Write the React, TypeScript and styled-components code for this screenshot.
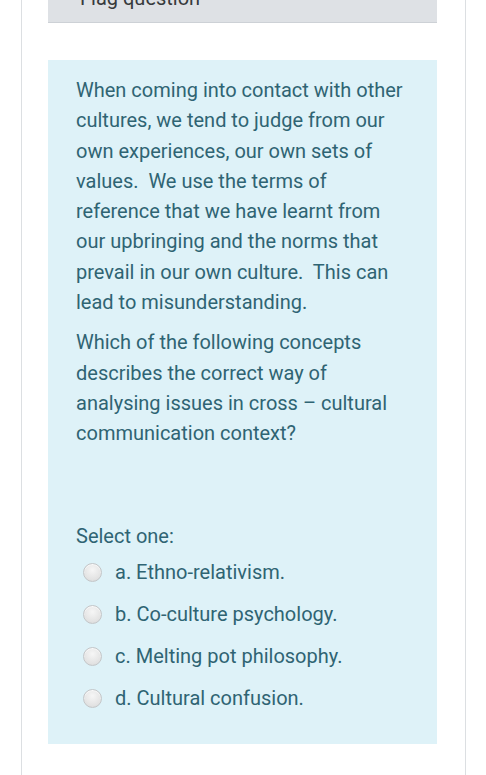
import React from "react";
import styled, { createGlobalStyle } from "styled-components";

const GlobalStyle = createGlobalStyle`
  html, body {
    margin: 0;
    padding: 0;
    background: #ffffff;
  }
  body {
    font-family: Roboto, "Liberation Sans", Arial, sans-serif;
    overflow: hidden;
  }
`;

const Page = styled.div`
  width: 486px;
  height: 775px;
  overflow: hidden;
  background: #ffffff;
`;

const Card = styled.div`
  margin-left: 21px;
  width: 445px;
  min-height: 800px;
  border-left: 1px solid #dcdfe2;
  border-right: 1px solid #dcdfe2;
  padding: 0 28px 0 26px;
  box-sizing: border-box;
`;

const InfoBox = styled.div`
  margin-top: -22px;
  height: 45px;
  background: #dee1e5;
  border-bottom: 1px solid #cdd1d6;
  display: flex;
  align-items: flex-start;
  padding: 9px 0 0 14px;
  box-sizing: border-box;
  color: #373a3c;
  font-size: 20px;
  line-height: 22px;
  gap: 8px;
`;

const Formulation = styled.div`
  margin-top: 37px;
  background: #def2f8;
  color: #2f6473;
  padding: 15px 29px 24px 28px;
  font-size: 20px;
  line-height: 30.3px;
`;

const Para = styled.p`
  margin: 0 0 10px;
`;

const Prompt = styled.div`
  margin-top: 72px;
  line-height: 30px;
`;

const Answers = styled.div`
  display: flex;
  flex-direction: column;
  margin-top: 1px;
`;

const Option = styled.label`
  display: flex;
  align-items: center;
  height: 42px;
  padding-left: 7px;
  gap: 13px;
`;

const Radio = styled.span`
  width: 17px;
  height: 17px;
  border-radius: 50%;
  flex: none;
  background: radial-gradient(circle at 50% 35%, #f6f6f6 0%, #e2e2e2 70%, #d2d2d2 100%);
  border: 1px solid #c4c6c8;
  box-shadow: inset 0 1px 1px rgba(255, 255, 255, 0.8);
`;

const options = [
  "a. Ethno-relativism.",
  "b. Co-culture psychology.",
  "c. Melting pot philosophy.",
  "d. Cultural confusion.",
];

export default function App() {
  return (
    <Page>
      <GlobalStyle />
      <Card>
        <InfoBox>
          <svg width="10" height="22" viewBox="0 0 10 22">
            <path d="M6 2 L3 12" stroke="#555" strokeWidth="1.4" fill="none" />
          </svg>
          <span>Flag question</span>
        </InfoBox>
        <Formulation>
          <Para>
            When coming into contact with other cultures, we tend to judge from
            our own experiences, our own sets of values.&nbsp; We use the terms
            of reference that we have learnt from our upbringing and the norms
            that prevail in our own culture.&nbsp; This can lead to
            misunderstanding.
          </Para>
          <Para>
            Which of the following concepts describes the correct way of
            analysing issues in cross – cultural communication context?
          </Para>
          <Prompt>Select one:</Prompt>
          <Answers>
            {options.map((o) => (
              <Option key={o}>
                <Radio />
                <span>{o}</span>
              </Option>
            ))}
          </Answers>
        </Formulation>
      </Card>
    </Page>
  );
}
